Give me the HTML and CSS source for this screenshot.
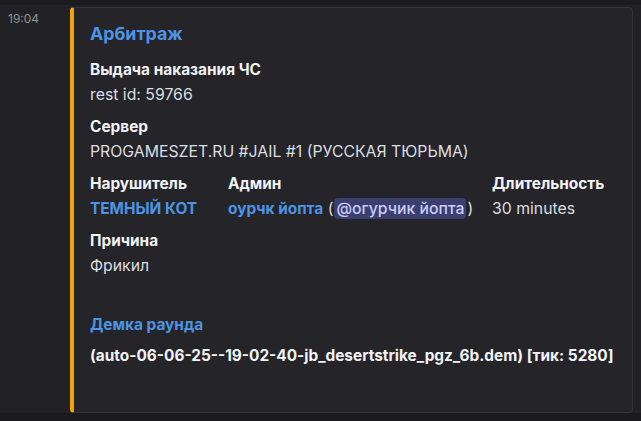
FILE: index.html
```html
<!DOCTYPE html>
<html lang="ru">
<head>
<meta charset="utf-8">
<link rel="stylesheet" href="styles.css">
</head>
<body>
<div class="strip"></div>
<div class="message">
  <div class="gutter"><span class="time">19:04</span></div>
  <div class="embed">
    <div class="title">Арбитраж</div>
    <div class="field">
      <div class="fname">Выдача наказания ЧС</div>
      <div class="fvalue">rest id: 59766</div>
    </div>
    <div class="field">
      <div class="fname">Сервер</div>
      <div class="fvalue">PROGAMESZET.RU #JAIL #1 (РУССКАЯ ТЮРЬМА)</div>
    </div>
    <div class="inline-row">
      <div class="field f1">
        <div class="fname">Нарушитель</div>
        <div class="fvalue link">ТЕМНЫЙ КОТ</div>
      </div>
      <div class="field f2">
        <div class="fname">Админ</div>
        <div class="fvalue"><span class="link">оурчк йопта</span> (<span class="mention">@огурчик йопта</span>)</div>
      </div>
      <div class="field f3">
        <div class="fname">Длительность</div>
        <div class="fvalue">30 minutes</div>
      </div>
    </div>
    <div class="field">
      <div class="fname">Причина</div>
      <div class="fvalue">Фрикил</div>
    </div>
    <div class="field demo">
      <div class="fname link">Демка раунда</div>
      <div class="fvalue bold">(auto-06-06-25--19-02-40-jb_desertstrike_pgz_6b.dem) [тик: 5280]</div>
    </div>
  </div>
</div>
<div class="strip bottom"></div>
</body>
</html>
```
FILE: styles.css
```css
html, body {
  margin: 0;
  padding: 0;
  background: #1b1b1f;
  width: 641px;
  height: 421px;
  overflow: hidden;
  font-family: Inter, "Noto Sans", sans-serif;
}
.strip {
  height: 5px;
  background: #1b1b1f;
}
.strip.bottom {
  height: 8px;
}
.message {
  display: flex;
  background: #222226;
  height: 408px;
  padding-top: 2px;
  box-sizing: border-box;
}
.gutter {
  width: 70px;
  flex: none;
}
.time {
  display: block;
  padding-left: 8px;
  padding-top: 4px;
  font-size: 12px;
  line-height: 16px;
  color: #8e9097;
}
.embed {
  width: 563px;
  height: 406px;
  box-sizing: border-box;
  background: #242429;
  border: 1px solid #333338;
  border-left: 4px solid #f5a302;
  border-radius: 4px;
  padding: 14px 16px 0 16px;
}
.title {
  font-size: 17.8px;
  font-weight: 700;
  line-height: 24px;
  color: #4d94e3;
  margin-bottom: 13px;
}
.field {
  margin-bottom: 10px;
}
.fname {
  font-size: 15.4px;
  font-weight: 700;
  line-height: 22px;
  color: #f2f3f5;
  margin-bottom: 3px;
}
.fvalue {
  font-size: 15.8px;
  line-height: 22px;
  color: #dbdee1;
}
.link {
  color: #4d94e3;
  font-weight: 700;
  font-size: 15.4px;
}
.fname.link {
  color: #4d94e3;
}
.bold {
  font-weight: 700;
  font-size: 15.4px;
  color: #f2f3f5;
  white-space: nowrap;
}
.inline-row {
  display: flex;
  margin-top: 1px;
}
.f1 { width: 138px; }
.f2 { width: 264px; }
.mention {
  background: #3b3f6e;
  color: #c9cdfb;
  border-radius: 4px;
  padding: 1px 2px;
  margin: 0 1px;
  font-weight: 500;
}
.demo {
  margin-top: 37px;
}
.demo .fvalue {
  margin-top: 9px;
}
```
